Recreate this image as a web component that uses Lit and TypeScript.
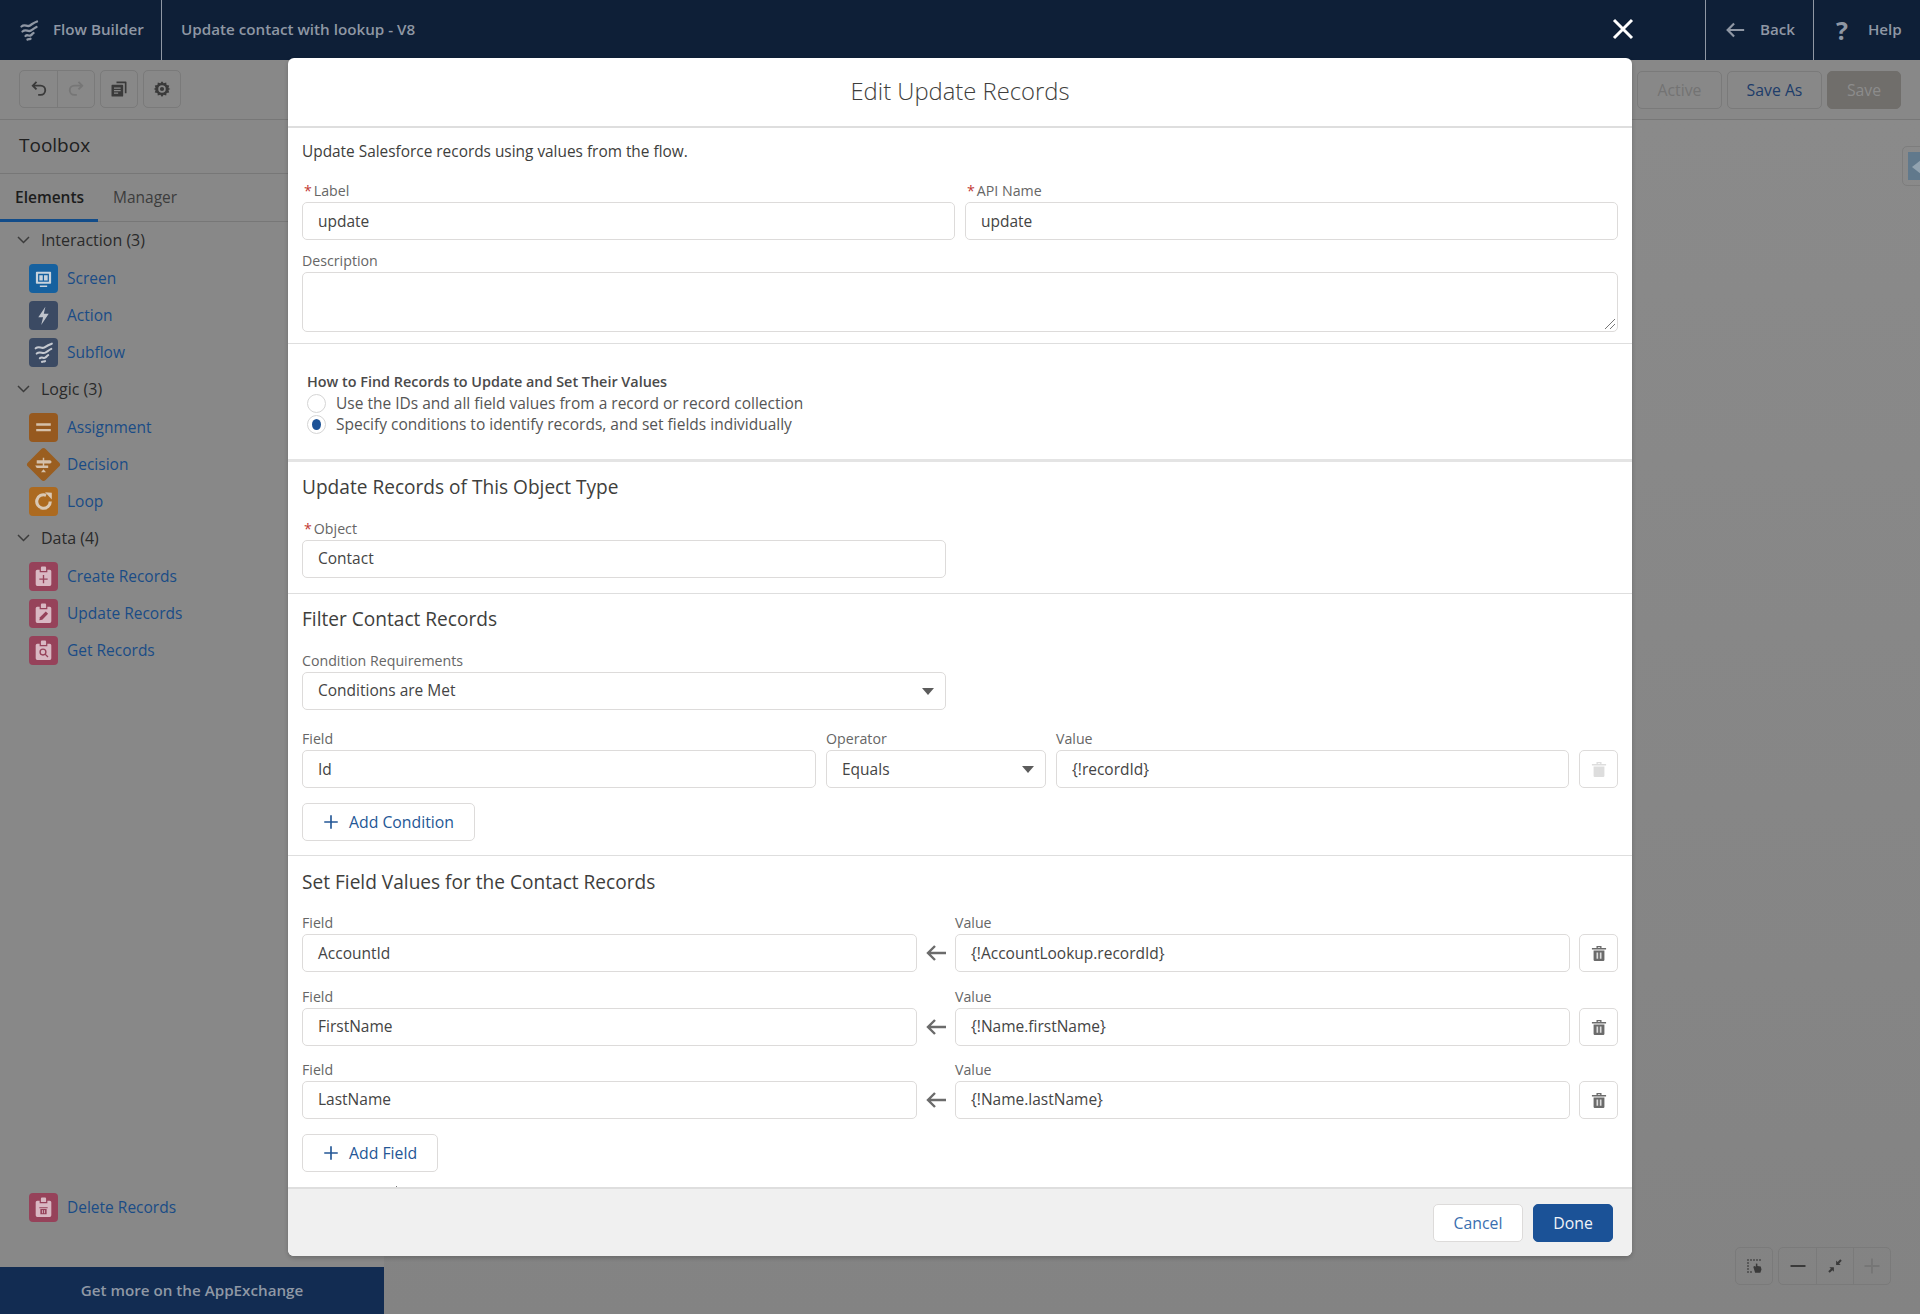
import { LitElement, css, html, svg } from 'lit'
import { customElement } from 'lit/decorators.js'

// small inline icons, all drawn on a 24 box unless noted
const waves = svg`<path d="M4.500 8.500C8 5.500 10 9.500 13 7.500S17 4.500 20 3.500M5.500 13.500C9 10.500 11 14.500 14 12.500S17.500 10 19.500 9M8.500 18C10.500 16 12 18.500 13.500 17.500S15.500 15.500 16.500 15M10.500 21.500c1-.8 1.800 0 3-.8" fill="none" stroke="currentColor" stroke-width="2.300" stroke-linecap="round"/>`
const icon = (body: unknown, size = 24, box = 24) =>
  html`<svg width=${size} height=${size} viewBox="0 0 ${box} ${box}">${body}</svg>`

const undo = svg`<path d="M9 3.500 4.500 8 9 12.500M5 8h9a5.500 5.500 0 0 1 0 11h-3" fill="none" stroke="currentColor" stroke-width="2.200"/>`
const redo = svg`<path d="M15 3.500 19.500 8 15 12.500M19 8h-9a5.500 5.500 0 0 0 0 11h3" fill="none" stroke="currentColor" stroke-width="2.200"/>`
const copy = svg`<path d="M9 3h11a1 1 0 0 1 1 1v13h-2V5H9z" fill="currentColor"/><path d="M4 7h12a1 1 0 0 1 1 1v12a1 1 0 0 1-1 1H4a1 1 0 0 1-1-1V8a1 1 0 0 1 1-1z" fill="currentColor"/><path d="M6 11h8M6 14h8M6 17h5" stroke="#888" stroke-width="1.500"/>`
const gear = svg`<path fill-rule="evenodd" fill="currentColor" d="M12 1.500l2.200 2.800 3.400-1 .5 3.500 3.500.5-1 3.400L23 12l-2.400 1.300 1 3.400-3.500.5-.5 3.500-3.400-1L12 22.500l-2.200-2.800-3.400 1-.5-3.500-3.500-.5 1-3.400L1 12l2.400-1.300-1-3.400 3.500-.5.5-3.500 3.400 1zm0 5.500a5 5 0 1 0 0 10 5 5 0 0 0 0-10z"/><circle cx="12" cy="12" r="2.800" fill="currentColor"/>`
const trash = svg`<path d="M3.500 6h17v1.800h-17zM9 6V3.500h6V6h-1.600V5h-2.800v1zM5.500 9h13v11.500a1 1 0 0 1-1 1h-11a1 1 0 0 1-1-1z" fill="currentColor"/><path d="M10 11.500v7.500M14 11.500v7.500" stroke="#ddd" stroke-width="2"/>`
const backArrow = svg`<path d="M11 5l-7 7 7 7M4.500 12H22" fill="none" stroke="currentColor" stroke-width="2.400"/>`
const plus = svg`<path d="M12 3v18M3 12h18" stroke="currentColor" stroke-width="2.200"/>`

const screen = svg`<path d="M5.500 5.500h13a.8.8 0 0 1 .8.8v10a.8.8 0 0 1-.8.8h-13a.8.8 0 0 1-.8-.8v-10a.8.8 0 0 1 .8-.8zM6.800 7.500v7.600h10.400V7.500zM8.500 18.800h7v1.400h-7z" fill="#c9d3dd" fill-rule="evenodd"/><path d="M8 8.800h3.300v5H8zM12.500 8.800H16v5h-3.500z" fill="#c9d3dd"/>`
const bolt = svg`<path d="M13.800 3.500 7 13.600h4.600L9.800 21l7.200-10.700h-4.700z" fill="#bfc4cc"/>`
const subflow = svg`<path d="M4.500 8C8 5 10 9 13 7S17 4.500 20 3.500M5.500 13C9 10 11 14 14 12S17.500 9.500 19.500 8.500M8.500 17.500C10.500 15.500 12 18 13.500 17S15.500 15 16.500 14.500M10.500 21c1-.8 1.800 0 3-.8" fill="none" stroke="#c5c9d0" stroke-width="2" stroke-linecap="round"/>`
const equals = svg`<path d="M5 8h14v2.200H5zM5 13.500h14v2.200H5z" fill="#d5c1ab"/>`
const signpost = svg`<path d="M5.500 8h13l1.500 1.500L18.500 11h-13zM4 13h12.500v2.400H5.500zM11.300 5.500h1.400v2.500h-1.400zM11.300 11h1.400v2h-1.400zM12 16.500l2.400 3H9.600z" fill="#d5c1ab"/>`
const loop = svg`<path d="M18.500 12A6.500 6.500 0 1 1 14.500 6" fill="none" stroke="#d9c8b4" stroke-width="3"/><path d="M13.500 3 20 3.500v6.500z" fill="#d9c8b4"/>`
const clip = svg`<path fill-rule="evenodd" fill="#d9b8c3" d="M6 5.500h2.300V7.800h7.400V5.500H18a1.500 1.500 0 0 1 1.500 1.500v12.500A1.500 1.500 0 0 1 18 21H6a1.500 1.500 0 0 1-1.500-1.500V7A1.500 1.500 0 0 1 6 5.500zM9.500 3.500a1 1 0 0 1 1-1h3a1 1 0 0 1 1 1v3.200h-5z"/>`
const clipAdd = svg`${clip}<path d="M12 10.500v8M8 14.500h8" stroke="#96425a" stroke-width="1.300"/>`
const clipEdit = svg`${clip}<path d="M8 18.500l.6-2.800 5.600-5.600 2.200 2.200-5.600 5.600z" fill="#96425a"/>`
const clipFind = svg`${clip}<circle cx="11.500" cy="13.500" r="2.800" fill="none" stroke="#96425a" stroke-width="1.300"/><path d="M13.500 15.500l2.800 2.800" stroke="#96425a" stroke-width="1.300"/>`
const clipDel = svg`${clip}<path d="M8 11.800h8v1H8zM9 13.500h6v5H9z" fill="#96425a"/><path d="M11 14.500v3M13 14.500v3" stroke="#d9b8c3" stroke-width=".8"/>`
const marquee = svg`<path d="M3 3h2v2H3zM7 3h2v2H7zM11 3h2v2h-2zM15 3h2v2h-2zM19 3h2v2h-2zM3 7h2v2H3zM3 11h2v2H3zM3 15h2v2H3zM3 19h2v2H3zM7 19h2v2H7z" fill="currentColor"/><path d="M11 13l2-1 1.500 1V8.500l2 .5v3l4.500.500 1 4-1.500 4.500h-7z" fill="currentColor"/>`
const fit = svg`<path d="M13.500 10.500V4.500l2 2L19 3l2 2-3.500 3.500 2 2zM10.500 13.500v6l-2-2L5 21l-2-2 3.500-3.500-2-2z" fill="currentColor"/>`

type Item = { name: string; tone: string; glyph: unknown }
const groups: { title: string; items: Item[] }[] = [
  {
    title: 'Interaction (3)',
    items: [
      { name: 'Screen', tone: 'blue', glyph: screen },
      { name: 'Action', tone: 'slate', glyph: bolt },
      { name: 'Subflow', tone: 'slate', glyph: subflow },
    ],
  },
  {
    title: 'Logic (3)',
    items: [
      { name: 'Assignment', tone: 'brown', glyph: equals },
      { name: 'Decision', tone: 'diamond', glyph: signpost },
      { name: 'Loop', tone: 'amber', glyph: loop },
    ],
  },
  {
    title: 'Data (4)',
    items: [
      { name: 'Create Records', tone: 'rose', glyph: clipAdd },
      { name: 'Update Records', tone: 'rose', glyph: clipEdit },
      { name: 'Get Records', tone: 'rose', glyph: clipFind },
    ],
  },
]

const rows = [
  ['AccountId', '{!AccountLookup.recordId}', 'first'],
  ['FirstName', '{!Name.firstName}', 'second'],
  ['LastName', '{!Name.lastName}', 'third'],
]

@customElement('app-root')
export class AppRoot extends LitElement {
  private element(item: Item) {
    return html`<div class="el">
      <span class="tile ${item.tone}">${icon(item.glyph, 25)}</span>
      <span class="el-name">${item.name}</span>
    </div>`
  }

  private field(label: string, value: string, cls = '', required = false) {
    return html`<div class=${cls}>
      <div class="lbl">${required ? html`<span class="req">*</span>` : ''}${label}</div>
      <div class="input">${value}</div>
    </div>`
  }

  private select(label: string, value: string, cls = '') {
    return html`<div class=${cls}>
      <div class="lbl">${label}</div>
      <div class="input sel">${value}<span class="caret"></span></div>
    </div>`
  }

  private sidebar() {
    return html`<aside class="side">
      <div class="side-title">Toolbox</div>
      <div class="tabs">
        <span class="tab on">Elements</span>
        <span class="tab">Manager</span>
      </div>
      <div class="tree">
        ${groups.map(
          (g) => html`<div class="group">
              <svg class="chev" width="13" height="8" viewBox="0 0 13 8">
                <path d="M1 1l5.500 5.500L12 1" fill="none" stroke="currentColor" stroke-width="1.500" />
              </svg>
              ${g.title}
            </div>
            ${g.items.map((i) => this.element(i))}`,
        )}
      </div>
      <div class="spacer"></div>
      ${this.element({ name: 'Delete Records', tone: 'rose', glyph: clipDel })}
      <div class="exchange">Get more on the AppExchange</div>
    </aside>`
  }

  private modal() {
    return html`<section class="modal">
      <div class="m-head">Edit Update Records</div>
      <div class="m-body">
        <div class="sec one">
          <div class="intro">Update Salesforce records using values from the flow.</div>
          <div class="two">
            ${this.field('Label', 'update', '', true)} ${this.field('API Name', 'update', '', true)}
          </div>
          <div class="lbl desc">Description</div>
          <div class="input area">
            <svg class="grip" width="12" height="12" viewBox="0 0 12 12">
              <path d="M11 1 1 11M11 6 6 11" stroke="#777" stroke-width="1" />
            </svg>
          </div>
        </div>
        <div class="sec radios">
          <div class="r-title">How to Find Records to Update and Set Their Values</div>
          <div class="r"><span class="dot"></span>Use the IDs and all field values from a record or record collection</div>
          <div class="r"><span class="dot on"></span>Specify conditions to identify records, and set fields individually</div>
        </div>
        <div class="sec obj">
          <h2>Update Records of This Object Type</h2>
          ${this.field('Object', 'Contact', 'half', true)}
        </div>
        <div class="sec filter">
          <h2>Filter Contact Records</h2>
          ${this.select('Condition Requirements', 'Conditions are Met', 'half')}
          <div class="cond">
            ${this.field('Field', 'Id')} ${this.select('Operator', 'Equals')} ${this.field('Value', '{!recordId}')}
            <button class="del off">${icon(trash, 20)}</button>
          </div>
          <button class="add cond-add">${icon(plus, 18)}<span>Add Condition</span></button>
        </div>
        <div class="sec values">
          <h2>Set Field Values for the Contact Records</h2>
          ${rows.map(
            ([f, v, pos]) => html`<div class="vrow ${pos}">
              ${this.field('Field', f)}
              <span class="arrow">${icon(backArrow, 24)}</span>
              ${this.field('Value', v)}
              <button class="del">${icon(trash, 20)}</button>
            </div>`,
          )}
          <button class="add field-add">${icon(plus, 18)}<span>Add Field</span></button>
        </div>
        <span class="tick"></span>
      </div>
      <div class="m-foot">
        <button class="btn">Cancel</button>
        <button class="btn done">Done</button>
      </div>
    </section>`
  }

  render() {
    return html`
      <header class="top">
        <div class="brand">
          <span class="logo">${icon(waves, 24)}</span>
          Flow Builder
        </div>
        <div class="flow-name">Update contact with lookup - V8</div>
        <div class="grow"></div>
        <div class="nav back">${icon(backArrow, 22)}<span>Back</span></div>
        <div class="nav help"><span class="q">?</span><span>Help</span></div>
      </header>
      <div class="bar">
        <div class="g">
          <button class="ib">${icon(undo, 20)}</button>
          <button class="ib dim">${icon(redo, 20)}</button>
        </div>
        <div class="g"><button class="ib solo">${icon(copy, 20)}</button></div>
        <div class="g"><button class="ib solo">${icon(gear, 18)}</button></div>
        <div class="grow"></div>
        <button class="tb muted">Active</button>
        <button class="tb link">Save As</button>
        <button class="tb solid">Save</button>
      </div>
      <main class="work">
        ${this.sidebar()}
        <div class="canvas"></div>
      </main>

      <div class="handle"><span></span></div>
      <div class="zoomer">
        <div class="g"><button class="ib solo">${icon(marquee, 18)}</button></div>
        <div class="g">
          <button class="ib">${icon(svg`<path d="M3 12h18" stroke="currentColor" stroke-width="2.400"/>`, 20)}</button>
          <button class="ib">${icon(fit, 18)}</button>
          <button class="ib dim">${icon(plus, 20)}</button>
        </div>
      </div>
      <svg class="close" width="22" height="22" viewBox="0 0 22 22">
        <path d="M2 2l18 18M20 2 2 20" stroke="#fff" stroke-width="3" />
      </svg>
      ${this.modal()}
    `
  }

  static styles = css`
    :host {
      display: block;
      position: relative;
      width: 1920px;
      height: 1314px;
      overflow: hidden;
      background: #888;
      font-family: 'Open Sans', 'Liberation Sans', sans-serif;
      font-size: 15.5px;
      color: #3e3e3c;
    }
    * {
      box-sizing: border-box;
    }
    button {
      font: inherit;
      padding: 0;
      margin: 0;
      background: none;
      cursor: pointer;
    }
    svg {
      display: block;
    }
    .grow,
    .spacer {
      flex: 1;
    }

    /* top bar */
    .top {
      height: 60px;
      display: flex;
      align-items: stretch;
      background: #0e1f37;
      color: #8f97a4;
      font-size: 15.2px;
      font-weight: 600;
    }
    .brand {
      width: 162px;
      display: flex;
      align-items: center;
      padding: 0 0 2px 17px;
      gap: 12px;
      border-right: 1px solid #8f97a4;
    }
    .logo {
      margin-top: 2px;
    }
    .flow-name {
      padding-left: 19px;
      line-height: 58px;
    }
    .nav {
      display: flex;
      align-items: center;
      border-left: 1px solid #8f97a4;
    }
    .back {
      width: 108px;
      padding-left: 18px;
      gap: 14px;
    }
    .help {
      width: 107px;
      padding-left: 22px;
      gap: 20px;
    }
    .nav span:last-child {
      margin-top: -2px;
    }
    .q {
      font-size: 25px;
      font-weight: 700;
    }

    /* toolbar */
    .bar {
      height: 60px;
      display: flex;
      align-items: flex-start;
      padding: 10px 19px;
      border-bottom: 1px solid #777;
      gap: 5px;
    }
    .g {
      display: flex;
      height: 38px;
      border: 1px solid #7a7a7a;
      border-radius: 5px;
    }
    .ib {
      width: 37px;
      border: 0;
      display: flex;
      align-items: center;
      justify-content: center;
      color: #3a3a3a;
    }
    .ib.solo {
      width: 36px;
    }
    .ib + .ib {
      border-left: 1px solid #7a7a7a;
    }
    .ib.dim {
      color: #767676;
    }
    .tb {
      height: 38px;
      border: 1px solid #7a7a7a;
      border-radius: 5px;
      font-size: 15.8px;
      font-weight: 500;
      margin-top: 1px;
    }
    .muted {
      width: 85px;
      color: #737373;
      margin-left: 0;
    }
    .link {
      width: 95px;
      color: #1d3c6a;
    }
    .solid {
      width: 74px;
      background: #706e6b;
      border-color: #706e6b;
      color: #8c8c8c;
    }

    /* sidebar */
    .work {
      height: 1194px;
      display: flex;
    }
    .side {
      width: 384px;
      display: flex;
      flex-direction: column;
    }
    .canvas {
      flex: 1;
      background: linear-gradient(#8a8a8a, #838383);
    }
    .side-title {
      height: 54px;
      line-height: 50px;
      padding-left: 19px;
      font-size: 19px;
      color: #202020;
      border-bottom: 1px solid #777;
    }
    .tabs {
      height: 48px;
      display: flex;
      border-bottom: 1px solid #777;
    }
    .tab {
      padding: 0 15px;
      line-height: 46px;
      color: #3c3c3c;
    }
    .tab.on {
      width: 98px;
      font-weight: 600;
      color: #1c1c1c;
      border-bottom: 3px solid #124c89;
      height: 48px;
    }
    .tree {
      display: flex;
      flex-direction: column;
      padding-top: 4px;
    }
    .group {
      height: 24px;
      margin: 2px 0 12px;
      display: flex;
      align-items: center;
      padding-left: 17px;
      gap: 11px;
      color: #2a2a2a;
      line-height: 24px;
      font-size: 16px;
    }
    .chev {
      color: #3c3c3c;
    }
    .el {
      height: 29px;
      margin: 0 0 8px 29px;
      display: flex;
      align-items: center;
      gap: 9px;
      color: #1a4c86;
    }
    .el-name {
      margin-top: -2px;
    }
    .tile {
      width: 29px;
      height: 29px;
      border-radius: 4px;
      display: flex;
      align-items: center;
      justify-content: center;
      position: relative;
    }
    .tile svg {
      position: relative;
    }
    .blue {
      background: #16619f;
    }
    .slate {
      background: #3b4a63;
    }
    .brown {
      background: #96591f;
    }
    .amber {
      background: #ac6a20;
    }
    .rose {
      background: #96425a;
    }
    .diamond::before {
      content: '';
      position: absolute;
      left: 2px;
      top: 2px;
      width: 25px;
      height: 25px;
      border-radius: 3px;
      background: #9a5e20;
      transform: rotate(45deg);
    }
    .spacer + .el {
      margin-bottom: 45px;
    }
    .exchange {
      height: 47px;
      line-height: 47px;
      text-align: center;
      background: #122c52;
      color: #8f98a5;
      font-size: 15.2px;
      font-weight: 600;
    }

    /* things lying over the page */
    .close {
      position: absolute;
      left: 1612px;
      top: 18px;
    }
    .handle {
      position: absolute;
      left: 1902px;
      top: 146px;
      width: 30px;
      height: 40px;
      border: 1px solid #7d7d7d;
      border-radius: 5px;
      padding: 5px 0 5px 5px;
    }
    .handle span {
      display: block;
      height: 100%;
      background: #61798c;
      position: relative;
    }
    .handle span::after {
      content: '';
      position: absolute;
      left: 4px;
      top: 8px;
      border: 7px solid transparent;
      border-right: 9px solid #92a3b0;
      border-left: 0;
    }
    .zoomer {
      position: absolute;
      left: 1735px;
      top: 1247px;
      display: flex;
      gap: 5px;
    }

    /* modal */
    .modal {
      position: absolute;
      left: 288px;
      top: 58px;
      width: 1344px;
      height: 1198px;
      background: #fff;
      border-radius: 6px;
      box-shadow: 0 2px 4px rgba(0, 0, 0, 0.2);
      display: flex;
      flex-direction: column;
      overflow: hidden;
    }
    .m-head {
      height: 70px;
      border-bottom: 2px solid #dedede;
      text-align: center;
      line-height: 66px;
      font-size: 23.8px;
      font-weight: 300;
      color: #3e3e3c;
    }
    .m-body {
      flex: 1;
      overflow: hidden;
      position: relative;
    }
    .tick {
      position: absolute;
      left: 108px;
      bottom: 0;
      width: 1px;
      height: 1px;
      background: #777;
    }
    .m-foot {
      height: 69px;
      border-top: 2px solid #dedede;
      background: #f0f0f0;
      display: flex;
      justify-content: flex-end;
      align-items: center;
      gap: 10px;
      padding: 1px 19px 0 0;
    }
    .btn {
      width: 90px;
      height: 38px;
      border: 1px solid #dddbda;
      border-radius: 5px;
      background: #fff;
      color: #3a6fb0;
      font-size: 15.8px;
    }
    .btn.done {
      width: 80px;
      background: #1b5297;
      border-color: #1b5297;
      color: #f0f4f8;
      font-weight: 500;
    }
    .sec {
      padding: 0 14px;
      border-bottom: 1px solid #dedede;
    }
    .lbl {
      height: 20px;
      line-height: 21px;
      margin-bottom: 2px;
      font-size: 14.2px;
      color: #666;
    }
    .req {
      color: #c23934;
      margin: 0 2px 0 2px;
    }
    .input {
      height: 38px;
      line-height: 35px;
      padding-left: 15px;
      border: 1px solid #dddbda;
      border-radius: 5px;
      position: relative;
      color: #444;
    }
    .two .input,
    .cond .input,
    .first .input {
      line-height: 36px;
    }
    .area {
      height: 60px;
    }
    .grip {
      position: absolute;
      right: 1px;
      bottom: 1px;
    }
    .caret {
      position: absolute;
      right: 11px;
      top: 15px;
      border: 6px solid transparent;
      border-top: 7px solid #5c5c5c;
      border-bottom: 0;
    }
    h2 {
      margin: 0;
      height: 24px;
      line-height: 24px;
      font-size: 19.1px;
      font-weight: 400;
      color: #3e3e3c;
    }
    .half {
      width: 644px;
    }
    .one {
      padding-top: 14px;
      padding-bottom: 11px;
    }
    .intro {
      height: 20px;
      line-height: 20px;
      margin-bottom: 18px;
      font-size: 15.4px;
      color: #3e3e3c;
    }
    .two {
      display: grid;
      grid-template-columns: 653px 653px;
      gap: 10px;
    }
    .desc {
      margin-top: 10px;
    }
    .radios {
      padding: 28px 14px 24px 19px;
      border-bottom-width: 3px;
      border-color: #e4e4e4;
    }
    .r-title {
      height: 21px;
      line-height: 20px;
      font-size: 14.4px;
      font-weight: 600;
      color: #4a4a4a;
    }
    .r {
      height: 21px;
      line-height: 21px;
      display: flex;
      align-items: center;
      gap: 10px;
      color: #555;
    }
    .dot {
      width: 19px;
      height: 19px;
      border: 1px solid #d5d5d5;
      border-radius: 50%;
      position: relative;
    }
    .dot.on::after {
      content: '';
      position: absolute;
      left: 4px;
      top: 3px;
      width: 9px;
      height: 11px;
      border-radius: 50%;
      background: #1b5297;
    }
    .obj {
      padding-top: 13px;
      padding-bottom: 15px;
    }
    .obj h2,
    .filter h2 {
      margin-bottom: 19px;
    }
    .filter {
      padding-top: 13px;
      padding-bottom: 14px;
    }
    .cond {
      display: grid;
      grid-template-columns: 514px 220px 513px 39px;
      column-gap: 10px;
      margin-top: 18px;
      align-items: end;
    }
    .cond-add {
      margin-top: 15px;
      width: 173px;
    }
    .field-add {
      margin-top: 15px;
      width: 136px;
    }
    .add {
      height: 38px;
      border: 1px solid #dddbda;
      border-radius: 5px;
      display: flex;
      align-items: center;
      gap: 9px;
      padding-left: 19px;
      color: #245796;
      font-size: 15.8px;
    }
    .add svg {
      flex: none;
    }
    .del {
      width: 39px;
      height: 38px;
      border: 1px solid #dddbda;
      border-radius: 5px;
      display: flex;
      align-items: center;
      justify-content: center;
      color: #6b6b6b;
    }
    .del.off {
      color: #dddddd;
    }
    .values {
      padding-top: 14px;
      border-bottom: 0;
    }
    .vrow {
      display: grid;
      grid-template-columns: 615px 38px 615px 48px;
      align-items: end;
    }
    .vrow .del {
      margin-left: 9px;
    }
    .first {
      margin-top: 18px;
    }
    .second {
      margin-top: 14px;
    }
    .third {
      margin-top: 13px;
    }
    .arrow {
      height: 38px;
      display: flex;
      align-items: center;
      justify-content: center;
      color: #6b6b6b;
    }
  `
}
